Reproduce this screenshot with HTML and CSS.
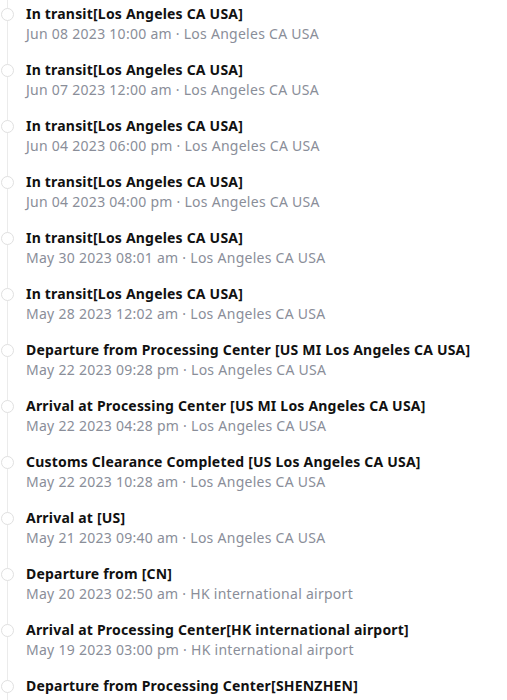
FILE: index.html
```html
<!DOCTYPE html>
<html>
<head>
<meta charset="utf-8">
<link rel="stylesheet" href="styles.css">
</head>
<body>
<ul class="timeline">
  <li class="event"><div class="title">In transit[Los Angeles CA USA]</div><div class="meta">Jun 08 2023 10:00 am · Los Angeles CA USA</div></li>
  <li class="event"><div class="title">In transit[Los Angeles CA USA]</div><div class="meta">Jun 07 2023 12:00 am · Los Angeles CA USA</div></li>
  <li class="event"><div class="title">In transit[Los Angeles CA USA]</div><div class="meta">Jun 04 2023 06:00 pm · Los Angeles CA USA</div></li>
  <li class="event"><div class="title">In transit[Los Angeles CA USA]</div><div class="meta">Jun 04 2023 04:00 pm · Los Angeles CA USA</div></li>
  <li class="event"><div class="title">In transit[Los Angeles CA USA]</div><div class="meta">May 30 2023 08:01 am · Los Angeles CA USA</div></li>
  <li class="event"><div class="title">In transit[Los Angeles CA USA]</div><div class="meta">May 28 2023 12:02 am · Los Angeles CA USA</div></li>
  <li class="event"><div class="title">Departure from Processing Center [US MI Los Angeles CA USA]</div><div class="meta">May 22 2023 09:28 pm · Los Angeles CA USA</div></li>
  <li class="event"><div class="title">Arrival at Processing Center [US MI Los Angeles CA USA]</div><div class="meta">May 22 2023 04:28 pm · Los Angeles CA USA</div></li>
  <li class="event"><div class="title">Customs Clearance Completed [US Los Angeles CA USA]</div><div class="meta">May 22 2023 10:28 am · Los Angeles CA USA</div></li>
  <li class="event"><div class="title">Arrival at [US]</div><div class="meta">May 21 2023 09:40 am · Los Angeles CA USA</div></li>
  <li class="event"><div class="title">Departure from [CN]</div><div class="meta">May 20 2023 02:50 am · HK international airport</div></li>
  <li class="event"><div class="title">Arrival at Processing Center[HK international airport]</div><div class="meta">May 19 2023 03:00 pm · HK international airport</div></li>
  <li class="event"><div class="title">Departure from Processing Center[SHENZHEN]</div></li>
</ul>
</body>
</html>
```
FILE: styles.css
```css
html, body {
  margin: 0;
  padding: 0;
  background: #fff;
}
body {
  font-family: "Noto Sans", "Open Sans", sans-serif;
  font-size: 14px;
}
.timeline {
  list-style: none;
  margin: 0;
  padding: 0;
}
.event {
  position: relative;
  height: 56px;
  box-sizing: border-box;
  padding: 4px 0 0 26px;
}
.event::before {
  content: "";
  position: absolute;
  left: 7px;
  top: 0;
  bottom: 0;
  width: 1px;
  background: #ebebeb;
}
.event::after {
  content: "";
  position: absolute;
  left: 1px;
  top: 8px;
  width: 11px;
  height: 11px;
  border: 1px solid #e0e0e0;
  border-radius: 50%;
  background: #fff;
}
.title {
  font-weight: 700;
  color: #111;
  line-height: 20px;
  letter-spacing: 0.2px;
  white-space: nowrap;
}
.meta {
  color: #8a8e99;
  line-height: 20px;
  letter-spacing: 0.27px;
  white-space: nowrap;
}
```
